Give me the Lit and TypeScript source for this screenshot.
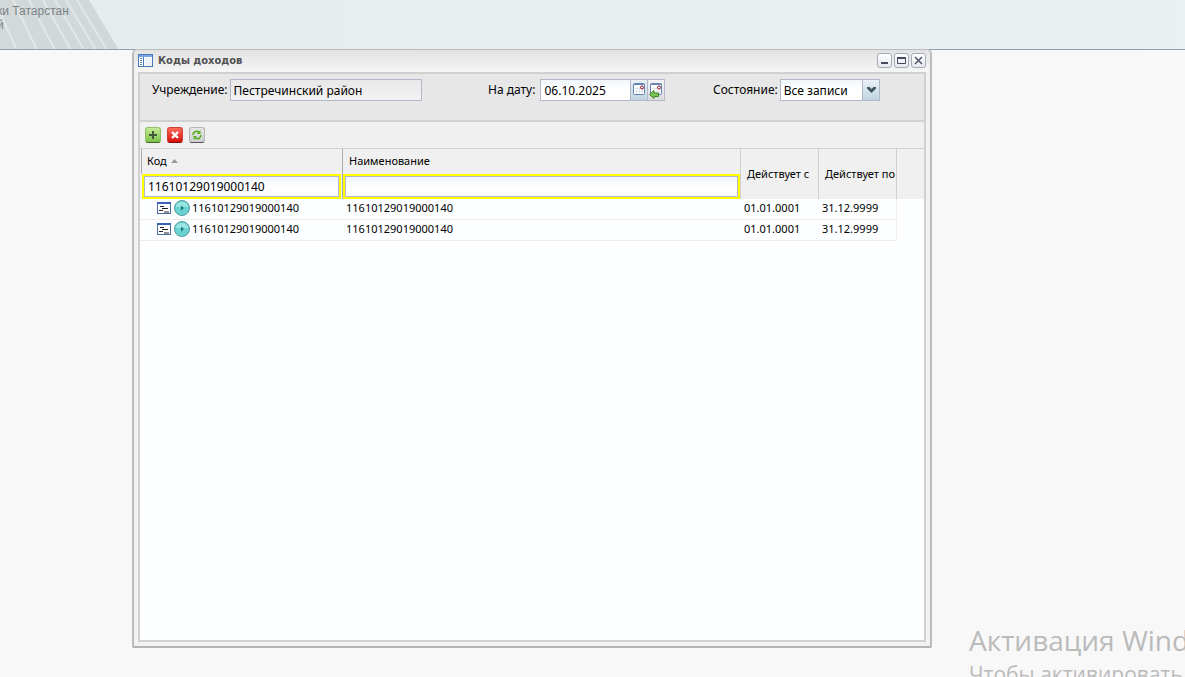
import { LitElement, html, svg, css } from "lit";
import { customElement, state } from "lit/decorators.js";

interface IncomeCode {
  code: string;
  name: string;
  from: string;
  to: string;
}

const calendar = svg`
  <rect x="0.5" y="0.5" width="11" height="11" rx="1" fill="#fff" stroke="#6583b5"/>
  <path d="M1 1h10v1H1z" fill="#6583b5"/>
  <path d="M2 5.5h8M2 8.5h8M3.5 4v7M6.5 4v7M9.5 4v7" stroke="#e0e4ec" fill="none"/>
  <circle cx="9" cy="4.5" r="1.5" fill="#fff" stroke="#8e1020"/>`;

@customElement("app-root")
export class AppRoot extends LitElement {
  @state() private rows: IncomeCode[] = [
    { code: "11610129019000140", name: "11610129019000140", from: "01.01.0001", to: "31.12.9999" },
    { code: "11610129019000140", name: "11610129019000140", from: "01.01.0001", to: "31.12.9999" },
  ];

  static styles = css`
    :host {
      display: block;
      position: relative;
      height: 100vh;
      overflow: hidden;
      background: #f8f8f8;
      color: #000;
      font: 12px/14px "Noto Sans", sans-serif;
    }
    * { box-sizing: border-box; }
    button, input, select { font: inherit; color: inherit; margin: 0; border-radius: 0; outline: none; }
    button { display: flex; align-items: center; justify-content: center; padding: 0; }
    svg { display: block; flex: none; }
    .banner {
      height: 50px;
      position: relative;
      overflow: hidden;
      border-bottom: 1px solid #8fa0ae;
      background: linear-gradient(90deg, #e6ebeb, #ebf1f2);
    }
    .stripes { position: absolute; left: 0; top: 0; }
    .org {
      position: relative;
      margin: 0;
      padding-top: 4px;
      font: 12px/14px "Liberation Sans", sans-serif;
      color: #7c8388;
      margin-left: -3px;
    }
    .org span { display: block; white-space: nowrap; }
    .watermark {
      position: absolute;
      left: 969px;
      bottom: -12px;
      white-space: nowrap;
      color: #bbb;
      font: 21px/29px "Open Sans", sans-serif;
    }
    .watermark p { margin: 0; }
    .watermark .big { font-size: 28px; line-height: 40px; }
    .window {
      position: absolute;
      top: 49px;
      left: 132px;
      right: 253px;
      bottom: 29px;
      display: flex;
      flex-direction: column;
      padding: 0 4px 4px;
      border: 2px solid #bcbcbc;
      border-top-width: 1px;
      border-bottom-color: #b4b4b4;
      border-radius: 5px 5px 2px 2px;
      background: #f2f2f2 linear-gradient(#e2e2e2, #f6f6f6 22px) no-repeat 0 0 / 100% 22px;
    }
    .title { display: flex; align-items: center; height: 22px; gap: 5px; padding-bottom: 2px; }
    .title h1 { flex: 1; margin: 0; font: bold 11px/14px "DejaVu Sans Condensed", "DejaVu Sans", sans-serif; color: #505050; padding-top: 1px; }
    .tools { display: flex; gap: 2px; }
    .tool { width: 15px; height: 15px; border: 1px solid #a4acb8; border-radius: 3px; background: linear-gradient(#fff, #e6e9ef); }
    .body { flex: 1; display: flex; flex-direction: column; border: 2px solid #d0d0d0; background: #fdfeff; min-height: 0; }
    .filters {
      display: grid;
      grid-template-columns: 335px 1fr 211px;
      align-items: start;
      height: 48px;
      padding-top: 5px;
      border-bottom: 2px solid #d0d0d0;
      background: #e7e7e7;
    }
    .field { display: flex; align-items: center; gap: 2px; padding-left: 12px; }
    .field.date { padding-left: 13px; gap: 5px; }
    .field.status { padding-left: 0; }
    .box { height: 22px; padding: 1px 3px 0; border: 1px solid #b5b8c8; background: linear-gradient(#eef5f9, #fff 8px); }
    .box.org-name { width: 192px; background: linear-gradient(#e8e8e8, #f2f2f2); }
    .combo { display: flex; position: relative; }
    .combo .box { width: 91px; }
    .trigger { width: 17px; height: 22px; border: 1px solid #b5b8c8; border-left: 0; background: linear-gradient(#e9f2f6, #bed4dd); }
    .trigger.today { background: linear-gradient(#f5f5f5, #d8dadd); }
    .combo select.box { width: 100px; padding: 1px 20px 0 3px; appearance: none; }
    .combo .arrow { position: absolute; right: 0; top: 0; width: 18px; height: 22px; padding: 7px 0 0 4px; border: 1px solid #b5b8c8; background: linear-gradient(#e9f2f6, #bed4dd); pointer-events: none; }
    .toolbar { display: flex; align-items: center; gap: 6px; height: 27px; padding-left: 5px; border-bottom: 1px solid #d0d0d0; background: #f0f0f0; }
    .act { width: 16px; height: 16px; border: 1px solid #999; border-radius: 3px; }
    .add { border-color: #8fc063; border-bottom-color: #3c6420; background: linear-gradient(#c4ec98, #7cc048); }
    .del { border-color: #d04038; border-bottom-color: #7c0c08; background: linear-gradient(#ff6a5c, #d60f0c); }
    .reload { border-color: #b4b4b4; border-bottom-color: #555; background: linear-gradient(#e8e8e8, #cfcfcf); }
    table { width: 100%; table-layout: fixed; border-collapse: separate; border-spacing: 0; font-size: 11px; }
    .c-code { width: 203px; }
    .c-date { width: 78px; }
    .c-rest { width: 27px; }
    thead { background: #f0f0f0; }
    th, td { padding: 0; text-align: left; font-weight: normal; white-space: nowrap; }
    th { height: 50px; border-right: 1px solid #d0d0d0; }
    th.date { padding-left: 6px; }
    th.filtered { border-right-color: #aaa; }
    .head { display: flex; align-items: center; gap: 4px; height: 25px; padding: 0 0 2px 6px; }
    .first .head { margin-left: 1px; border-left: 1px solid #aaa; padding-left: 5px; }
    .find { display: block; width: 100%; height: 25px; padding: 1px 4px 2px; border: 2px solid #ff0; box-shadow: inset 0 0 0 1px #b5b8c8; background: linear-gradient(#eef5f9, #fff 12px); font-size: 12px; }
    .first .find { margin-left: 2px; width: 199px; }
    tbody td { height: 21px; padding: 0 0 3px 3px; border-bottom: 1px solid #ededed; line-height: 13px; }
    tbody td:first-child { padding-bottom: 0; }
    tbody td:nth-child(4) { border-right: 1px solid #ededed; }
    tbody td:nth-child(5) { border-bottom: 0; }
    .code { display: flex; align-items: flex-start; gap: 2px; height: 20px; padding: 1px 0 0 14px; }
    .code span { padding-top: 1px; }
  `;

  render() {
    return html`
      <header class="banner">
        <svg class="stripes" width="122" height="50" aria-hidden="true">
          <defs><linearGradient id="fade"><stop offset="0" stop-color="#d3d8d8"/><stop offset="1" stop-color="#d1d8d8"/></linearGradient></defs>
          <path d="M0 0H89L119 50H0z" fill="url(#fade)"/>
          <path d="M-6 0 17 50M13 0 37 50M29 0 55 50M43 0 71 50M55 0 84 50M66 0 96 50M77 0 107 50" stroke="#e2e7e7" stroke-width="2" fill="none"/>
        </svg>
        <p class="org"><span>ки Татарстан</span><span>й</span></p>
      </header>

      <aside class="watermark"><p class="big">Активация Windows</p><p>Чтобы активировать Windows</p></aside>

      <section class="window" aria-labelledby="title">
        <div class="title">
          <svg width="15" height="13" aria-hidden="true">
            <rect x="0.5" y="0.5" width="14" height="12" fill="#fff" stroke="#4a78bc"/>
            <path d="M1 1h13v2H1z" fill="#79a5e3"/><path d="M5.5 3v9" stroke="#4a78bc"/>
            <path d="M2 4.500h2M2 6.500h2M2 8.500h2M2 10.500h2" stroke="#5e7fae"/><path d="M7 4h7v8H7z" fill="#edf2f9"/>
          </svg>
          <h1 id="title">Коды доходов</h1>
          <div class="tools">
            <button class="tool" aria-label="Свернуть"><svg width="11" height="11"><path d="M2 8h7" stroke="#454b5c" stroke-width="2"/></svg></button>
            <button class="tool" aria-label="Развернуть"><svg width="11" height="11"><path d="M1.5 2.5h8v6h-8z" fill="none" stroke="#454b5c"/><path d="M1 3h9" stroke="#454b5c" stroke-width="2"/></svg></button>
            <button class="tool" aria-label="Закрыть"><svg width="11" height="11"><path d="M2 2l7 7M9 2l-7 7" stroke="#50566a" stroke-width="1.5"/></svg></button>
          </div>
        </div>

        <div class="body">
          <form class="filters">
            <div class="field">
              <label for="org">Учреждение:</label>
              <input id="org" class="box org-name" readonly .value=${"Пестречинский район"}>
            </div>
            <div class="field date">
              <label for="date">На дату:</label>
              <div class="combo">
                <input id="date" class="box" .value=${"06.10.2025"}>
                <button type="button" class="trigger" aria-label="Выбрать дату"><svg width="12" height="14">${calendar}</svg></button>
                <button type="button" class="trigger today" aria-label="Текущая дата"><svg width="14" height="17"><g transform="translate(1 1)">${calendar}</g><path d="M.5 12.5 5 8.5V11h4.500v3.500H5V16.500z" fill="#7cc455" stroke="#3f8a26"/></svg></button>
              </div>
            </div>
            <div class="field status">
              <label for="status">Состояние:</label>
              <div class="combo">
                <select id="status" class="box"><option>Все записи</option></select>
                <span class="arrow"><svg width="9" height="6"><path d="M0 0h2.500L4.500 2 6.500 0H9v1.500L4.500 6 0 1.500z" fill="#405560"/></svg></span>
              </div>
            </div>
          </form>

          <div class="toolbar">
            <button class="act add" aria-label="Добавить"><svg width="12" height="12"><path d="M6 2v8M2 6h8" stroke="#44583a" stroke-width="2"/></svg></button>
            <button class="act del" aria-label="Удалить"><svg width="12" height="12"><path d="M3 3l6 6M9 3 3 9" stroke="#fff" stroke-width="2.400"/></svg></button>
            <button class="act reload" aria-label="Обновить"><svg width="12" height="12" fill="none" stroke="#59ad1f" stroke-width="1.600"><path d="M2 6C2 3 5 1.500 8 3M10 6c0 3-3 4.500-6 3"/><path d="M9.500 1v4H6zM2.500 11V7H6z" fill="#59ad1f" stroke="none"/></svg></button>
          </div>

          <table>
            <colgroup><col class="c-code"><col><col class="c-date"><col class="c-date"><col class="c-rest"></colgroup>
            <thead>
              <tr>
                <th class="filtered first" aria-sort="ascending">
                  <div class="head"><span>Код</span><svg width="7" height="4"><path d="M0 4 3.500 0 7 4z" fill="#999"/></svg></div>
                  <input class="find" aria-label="Фильтр: Код" .value=${"11610129019000140"}>
                </th>
                <th>
                  <div class="head">Наименование</div>
                  <input class="find" aria-label="Фильтр: Наименование">
                </th>
                <th class="date">Действует с</th>
                <th class="date">Действует по</th>
                <td></td>
              </tr>
            </thead>
            <tbody>
              ${this.rows.map((r) => html`
                <tr>
                  <td><div class="code">
                    <svg width="15" height="16" aria-hidden="true">
                      <rect x="0.500" y="2.500" width="13" height="11" fill="#fff" stroke="#4d6ba3"/><path d="M0 2h14v2H0z" fill="#3b62b4"/>
                      <path d="M3 6.500h4M5 8.500h6M2 10.500h4M7 12h5" stroke="#222"/>
                    </svg>
                    <svg width="16" height="16" aria-hidden="true">
                      <circle cx="8" cy="8" r="7.500" fill="#6ad2d0" stroke="#579aa0"/><path d="M2 7a6 5 0 0 1 12 0z" fill="#98e5e1"/>
                      <path d="M7 5.500v5L10 8z" fill="#20747c"/>
                    </svg>
                    <span>${r.code}</span>
                  </div></td>
                  <td>${r.name}</td>
                  <td>${r.from}</td>
                  <td>${r.to}</td>
                  <td></td>
                </tr>`)}
            </tbody>
          </table>
        </div>
      </section>
    `;
  }
}
